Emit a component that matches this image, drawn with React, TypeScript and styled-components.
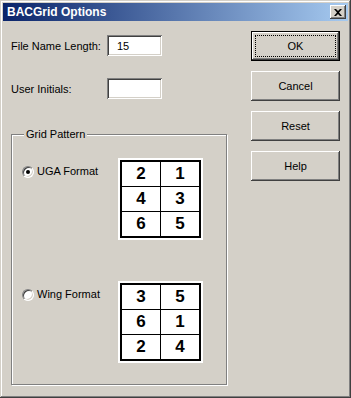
import styled, { createGlobalStyle } from "styled-components"

const Global = createGlobalStyle`
  html, body {
    margin: 0;
    padding: 0;
    background: #d4d0c8;
  }
  body {
    font-family: "Liberation Sans", Arial, sans-serif;
    font-size: 11px;
    color: #000;
  }
`

const Window = styled.div`
  box-sizing: border-box;
  width: 351px;
  height: 398px;
  padding: 3px;
  display: flex;
  flex-direction: column;
  background: #d4d0c8;
  box-shadow: inset -1px -1px #404040, inset 1px 1px #d4d0c8,
    inset -2px -2px #808080, inset 2px 2px #fff;
`

const TitleBar = styled.div`
  height: 18px;
  display: flex;
  align-items: center;
  justify-content: space-between;
  padding: 0 2px 0 4px;
  background: linear-gradient(to right, #0a246a, #a6caf0);
`

const TitleText = styled.span`
  color: #fff;
  font-weight: bold;
  font-size: 12px;
  line-height: 18px;
`

const CloseButton = styled.div`
  box-sizing: border-box;
  width: 16px;
  height: 14px;
  display: flex;
  align-items: center;
  justify-content: center;
  background: #d4d0c8;
  box-shadow: inset -1px -1px #404040, inset 1px 1px #fff,
    inset -2px -2px #808080;
`

const Body = styled.div`
  flex: 1;
  display: flex;
  gap: 24px;
  padding: 10px 8px 0 8px;
`

const LeftColumn = styled.div`
  width: 216px;
  padding-top: 4px;
  display: flex;
  flex-direction: column;
`

const FieldRow = styled.div<{ $spaced?: boolean }>`
  display: flex;
  align-items: center;
  height: 21px;
  margin-top: ${(p) => (p.$spaced ? "22px" : "0")};
`

const FieldLabel = styled.span`
  width: 96px;
`

const TextBox = styled.div`
  box-sizing: border-box;
  width: 55px;
  height: 21px;
  padding: 0 10px;
  display: flex;
  align-items: center;
  background: #fff;
  box-shadow: inset 1px 1px #808080, inset -1px -1px #fff,
    inset 2px 2px #404040, inset -2px -2px #d4d0c8;
`

const GroupBox = styled.fieldset`
  margin: 28px 0 0 0;
  padding: 17px 0 21px 0;
  border: 1px solid #808080;
  box-shadow: inset 1px 1px #fff, 1px 1px #fff;
  min-width: 0;
`

const Legend = styled.legend`
  margin-left: 12px;
  padding: 0 2px;
  line-height: 14px;
  background: #d4d0c8;
`

const PatternRow = styled.div<{ $spaced?: boolean }>`
  display: flex;
  align-items: flex-start;
  padding-left: 10px;
  margin-top: ${(p) => (p.$spaced ? "41px" : "0")};
`

const OptionLabel = styled.label`
  width: 96px;
  margin-top: 7px;
  display: flex;
  align-items: center;
  gap: 3px;
  line-height: 13px;
`

const Radio = styled.span<{ $checked?: boolean }>`
  box-sizing: border-box;
  width: 12px;
  height: 12px;
  border-radius: 50%;
  border: 1px solid;
  border-color: #808080 #fff #fff #808080;
  background: #fff;
  box-shadow: inset 1px 1px #404040, inset -1px -1px #d4d0c8;
  display: flex;
  align-items: center;
  justify-content: center;

  &::after {
    content: "";
    width: 4px;
    height: 4px;
    border-radius: 50%;
    background: #000;
    display: ${(p) => (p.$checked ? "block" : "none")};
  }
`

const GridFrame = styled.div`
  padding: 2px;
  background: #fff;
`

const Grid = styled.div`
  display: grid;
  grid-template-columns: 38px 38px;
  grid-template-rows: 24px 24px 24px;
  gap: 1px;
  border: 2px solid #000;
  background: #000;
`

const Cell = styled.div`
  background: #fff;
  display: flex;
  align-items: center;
  justify-content: center;
  font-weight: bold;
  font-size: 17px;
`

const ButtonColumn = styled.div`
  display: flex;
  flex-direction: column;
  gap: 10px;
`

const Button = styled.div<{ $default?: boolean }>`
  position: relative;
  box-sizing: border-box;
  width: 89px;
  height: 30px;
  display: flex;
  align-items: center;
  justify-content: center;
  background: #d4d0c8;
  border: ${(p) => (p.$default ? "1px solid #000" : "none")};
  box-shadow: inset -1px -1px #404040, inset 1px 1px #fff,
    inset -2px -2px #808080, inset 2px 2px #d4d0c8;

  &::after {
    content: "";
    position: absolute;
    inset: 3px;
    border: 1px dotted #000;
    display: ${(p) => (p.$default ? "block" : "none")};
  }
`

const PatternGrid = ({ values }: { values: number[] }) => (
  <GridFrame>
    <Grid>
      {values.map((v, i) => (
        <Cell key={i}>{v}</Cell>
      ))}
    </Grid>
  </GridFrame>
)

export default function App() {
  return (
    <>
      <Global />
      <Window>
        <TitleBar>
          <TitleText>BACGrid Options</TitleText>
          <CloseButton>
            <svg width="8" height="7" viewBox="0 0 8 7">
              <path
                d="M0 0h2l2 2 2-2h2L5 3.5 8 7H6L4 5 2 7H0l3-3.5z"
                fill="#000"
              />
            </svg>
          </CloseButton>
        </TitleBar>
        <Body>
          <LeftColumn>
            <FieldRow>
              <FieldLabel>File Name Length:</FieldLabel>
              <TextBox>15</TextBox>
            </FieldRow>
            <FieldRow $spaced>
              <FieldLabel>User Initials:</FieldLabel>
              <TextBox />
            </FieldRow>
            <GroupBox>
              <Legend>Grid Pattern</Legend>
              <PatternRow>
                <OptionLabel>
                  <Radio $checked />
                  UGA Format
                </OptionLabel>
                <PatternGrid values={[2, 1, 4, 3, 6, 5]} />
              </PatternRow>
              <PatternRow $spaced>
                <OptionLabel>
                  <Radio />
                  Wing Format
                </OptionLabel>
                <PatternGrid values={[3, 5, 6, 1, 2, 4]} />
              </PatternRow>
            </GroupBox>
          </LeftColumn>
          <ButtonColumn>
            <Button $default>OK</Button>
            <Button>Cancel</Button>
            <Button>Reset</Button>
            <Button>Help</Button>
          </ButtonColumn>
        </Body>
      </Window>
    </>
  )
}
